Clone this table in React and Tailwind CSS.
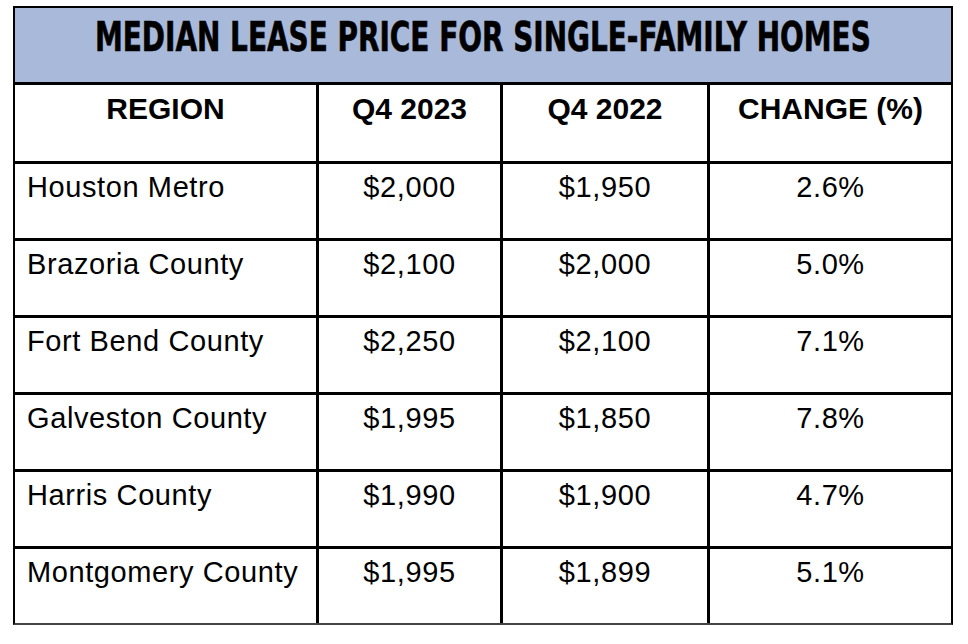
import React, { useLayoutEffect, useRef, useState } from 'react';

const rows = [
  ['Houston Metro', '$2,000', '$1,950', '2.6%'],
  ['Brazoria County', '$2,100', '$2,000', '5.0%'],
  ['Fort Bend County', '$2,250', '$2,100', '7.1%'],
  ['Galveston County', '$1,995', '$1,850', '7.8%'],
  ['Harris County', '$1,990', '$1,900', '4.7%'],
  ['Montgomery County', '$1,995', '$1,899', '5.1%'],
];

const cols = ['w-[301px]', 'w-[184px]', 'w-[207px]', 'w-[244px]'];

const Row = ({ cells, head }) => (
  <div className={`flex ${head ? 'h-[79px]' : 'h-[77px]'} border-t-[3px] border-black`}>
    {cells.map((c, i) => (
      <div
        key={i}
        className={`${cols[i]} ${i > 0 ? 'border-l-[3px] border-black' : ''} ${
          head
            ? 'text-center pt-[7px] text-[30px] leading-[34px] font-bold'
            : `${i > 0 ? 'text-center' : 'pl-[12px]'} pt-[7px] text-[29px] leading-[33px] tracking-[0.6px]`
        }`}
      >
        {c}
      </div>
    ))}
  </div>
);

export default function App() {
  const titleRef = useRef(null);
  const [sx, setSx] = useState(1);

  // squeeze the title to the condensed width of the original
  useLayoutEffect(() => {
    const w = titleRef.current.scrollWidth;
    if (w) setSx(776 / w);
  }, []);

  return (
    <div className="w-[968px] h-[644px] bg-white pl-[13px] pt-[6px] font-['Liberation_Sans',Arial,sans-serif] text-black">
      <div className="w-[940px] border-2 border-black border-b-[#444]">
        <div className="h-[74px] bg-[#a9b9d9] flex justify-center pt-[5px] overflow-hidden">
          <h1
            ref={titleRef}
            style={{ transform: `scaleX(${sx})` }}
            className="font-['DejaVu_Sans_Condensed','Liberation_Sans',sans-serif] font-bold text-[40px] leading-[48px] whitespace-nowrap shrink-0 origin-center [-webkit-text-stroke:0.6px_black]"
          >
            MEDIAN LEASE PRICE FOR SINGLE-FAMILY HOMES
          </h1>
        </div>
        <Row head cells={['REGION', 'Q4 2023', 'Q4 2022', 'CHANGE (%)']} />
        {rows.map((r) => (
          <Row key={r[0]} cells={r} />
        ))}
      </div>
    </div>
  );
}
